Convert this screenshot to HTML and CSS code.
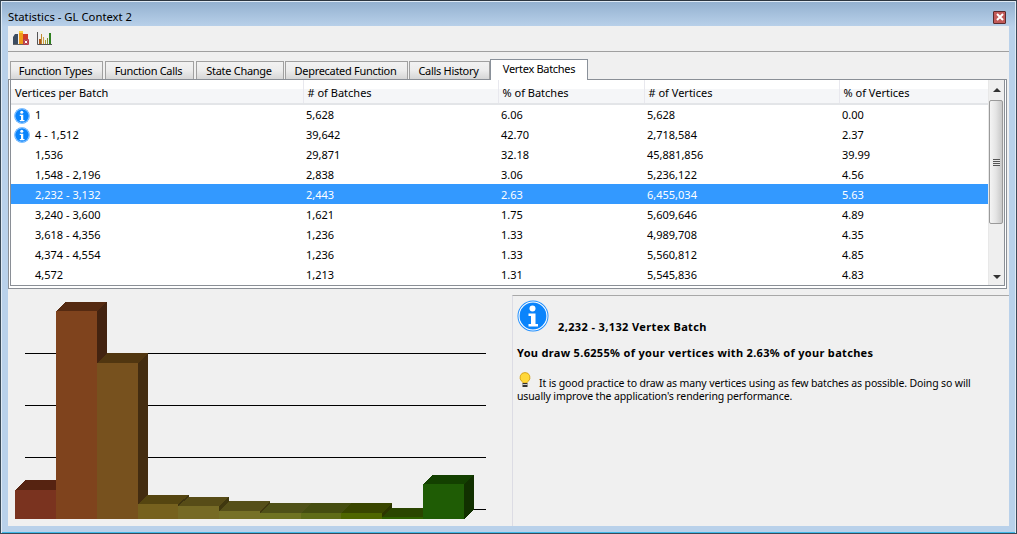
FILE: index.html
```html
<!DOCTYPE html>
<html lang="en">
<head>
<meta charset="utf-8">
<title>Statistics - GL Context 2</title>
<link rel="stylesheet" href="styles.css">
</head>
<body>
<svg class="defs" width="0" height="0" aria-hidden="true">
  <defs>
    <symbol id="info" viewBox="0 0 32 32">
      <circle cx="16" cy="16" r="15.5" fill="#1f8fff"/>
      <circle cx="16" cy="16" r="14" fill="none" stroke="#fff" stroke-width="1.1"/>
      <circle cx="16" cy="16" r="13" fill="#0a84fb"/>
      <circle cx="15.5" cy="8.5" r="3" fill="#fff"/>
      <path d="M11.5 13.5h7v10.5h2.5v2.5H11.5V24h2.5v-8h-2.500z" fill="#fff"/>
    </symbol>
  </defs>
</svg>
<div class="window">
  <header class="titlebar">
    <span class="title">Statistics - GL Context 2</span>
    <span class="close"><svg width="8" height="8" viewBox="0 0 8 8"><path d="M1 1l6 6M7 1L1 7" stroke="#fff" stroke-width="2"/></svg></span>
  </header>
  <div class="toolbar">
    <svg class="tool" width="17" height="17" viewBox="0 0 17 17">
      <path d="M0 14V7l2-3h3v10z" fill="#3c4c60"/>
      <rect x="6" y="1" width="4" height="13" fill="#f09a18"/>
      <rect x="6" y="1" width="4" height="2" fill="#f8d040"/>
      <rect x="10" y="4" width="5" height="10" fill="#d03a28"/>
      <rect x="0" y="14" width="11" height="1" fill="#666"/>
      <rect x="10" y="9" width="6" height="6" rx="1" fill="#b8404c"/>
      <path d="M11.800 10.800l2.400 2.400M14.200 10.800l-2.400 2.400" stroke="#fff" stroke-width="1"/>
    </svg>
    <svg class="tool" width="15" height="15" viewBox="0 0 15 15">
      <path d="M.5 1v12.500H15" fill="none" stroke="#555" stroke-width="1"/>
      <rect x="2" y="8" width="2" height="5" fill="#b05a20"/>
      <rect x="4" y="3" width="1" height="10" fill="#c08a30"/>
      <rect x="6" y="6" width="1" height="7" fill="#d0a040"/>
      <rect x="8" y="9" width="1" height="4" fill="#a8a030"/>
      <rect x="10" y="7" width="1" height="6" fill="#80902a"/>
      <rect x="12" y="2" width="2" height="11" fill="#2f8020"/>
    </svg>
  </div>
  <nav class="tabs">
    <span class="tab tab-1">Function Types</span>
    <span class="tab tab-2">Function Calls</span>
    <span class="tab tab-3">State Change</span>
    <span class="tab tab-4">Deprecated Function</span>
    <span class="tab tab-5">Calls History</span>
    <span class="tab tab-active">Vertex Batches</span>
  </nav>
  <section class="pane">
    <div class="list-frame">
      <div class="list">
        <div class="list-main">
          <table class="grid">
            <colgroup>
              <col class="c1"><col class="c2"><col class="c3"><col class="c4"><col class="c5">
            </colgroup>
            <thead>
              <tr><th>Vertices per Batch</th><th># of Batches</th><th>% of Batches</th><th># of Vertices</th><th>% of Vertices</th></tr>
            </thead>
            <tbody>
              <tr><td class="first"><svg class="row-icon" width="16" height="16"><use href="#info"/></svg>1</td><td>5,628</td><td>6.06</td><td>5,628</td><td>0.00</td></tr>
              <tr><td class="first"><svg class="row-icon" width="16" height="16"><use href="#info"/></svg>4 - 1,512</td><td>39,642</td><td>42.70</td><td>2,718,584</td><td>2.37</td></tr>
              <tr><td class="first">1,536</td><td>29,871</td><td>32.18</td><td>45,881,856</td><td>39.99</td></tr>
              <tr><td class="first">1,548 - 2,196</td><td>2,838</td><td>3.06</td><td>5,236,122</td><td>4.56</td></tr>
              <tr class="selected"><td class="first">2,232 - 3,132</td><td>2,443</td><td>2.63</td><td>6,455,034</td><td>5.63</td></tr>
              <tr><td class="first">3,240 - 3,600</td><td>1,621</td><td>1.75</td><td>5,609,646</td><td>4.89</td></tr>
              <tr><td class="first">3,618 - 4,356</td><td>1,236</td><td>1.33</td><td>4,989,708</td><td>4.35</td></tr>
              <tr><td class="first">4,374 - 4,554</td><td>1,236</td><td>1.33</td><td>5,560,812</td><td>4.85</td></tr>
              <tr><td class="first">4,572</td><td>1,213</td><td>1.31</td><td>5,545,836</td><td>4.83</td></tr>
            </tbody>
          </table>
        </div>
        <div class="scrollbar">
          <span class="arrow arrow-up"></span>
          <div class="thumb"><span class="grip"></span></div>
          <span class="arrow arrow-down"></span>
        </div>
      </div>
    </div>
  </section>
  <div class="split">
    <div class="chart">
      <svg width="504" height="233" viewBox="8 293 504 233">
        <g stroke="#000" stroke-width="1" shape-rendering="crispEdges">
          <path d="M25 353.500H486M25 405.500H486M25 457.500H486M25 509.500H486"/>
        </g>
        <g shape-rendering="crispEdges">
          <path d="M15 490l10-10h41v10z" fill="#562311"/>
          <rect x="15" y="490" width="41" height="29" fill="#7a331f"/>

          <path d="M97 311l10-9V353l-10 10z" fill="#432310"/>
          <path d="M56 311l10-9h41l-10 9z" fill="#552a11"/>
          <rect x="56" y="311" width="41" height="208" fill="#7f431d"/>

          <path d="M138 363l10-10V495l-10 9z" fill="#432c10"/>
          <path d="M97 363l10-10h41l-10 10z" fill="#513610"/>
          <rect x="97" y="363" width="41" height="156" fill="#77511e"/>

          <path d="M178 504l11-9v2l-11 9z" fill="#3f3410"/>
          <path d="M138 504l10-9h41l-11 9z" fill="#554510"/>
          <rect x="138" y="504" width="40" height="15" fill="#76611e"/>

          <path d="M219 506l10-9v4l-10 10z" fill="#40380f"/>
          <path d="M178 506l11-9h40l-10 9z" fill="#574c17"/>
          <rect x="178" y="506" width="41" height="13" fill="#766a25"/>

          <path d="M260 511l10-10v2l-10 10z" fill="#40390f"/>
          <path d="M219 511l10-10h41l-10 10z" fill="#565019"/>
          <rect x="219" y="511" width="41" height="8" fill="#767127"/>

          <path d="M260 513l10-10h41l-10 10z" fill="#4f5118"/>
          <rect x="260" y="513" width="41" height="6" fill="#6f7322"/>

          <path d="M301 513l10-10h40l-10 10z" fill="#454d10"/>
          <rect x="301" y="513" width="40" height="6" fill="#5f6c17"/>

          <path d="M382 513l10-10v5l-10 9z" fill="#2c3600"/>
          <path d="M341 513l10-10h41l-10 10z" fill="#394500"/>
          <rect x="341" y="513" width="41" height="6" fill="#4f6600"/>

          <path d="M382 517l10-9h41l-10 9z" fill="#2a4500"/>
          <rect x="382" y="517" width="41" height="2" fill="#2f6000"/>

          <path d="M464 484l10-9v34l-10 10z" fill="#113000"/>
          <path d="M423 484l10-9h41l-10 9z" fill="#134000"/>
          <rect x="423" y="484" width="41" height="35" fill="#1f5c05"/>
        </g>
      </svg>
    </div>
    <aside class="info">
      <div class="info-head">
        <svg class="info-icon" width="32" height="32"><use href="#info"/></svg>
        <span class="info-title">2,232 - 3,132 Vertex Batch</span>
      </div>
      <p class="info-summary">You draw 5.6255% of your vertices with 2.63% of your batches</p>
      <p class="info-text"><svg class="bulb" width="12" height="16" viewBox="0 0 12 16">
          <path d="M6 .5a5 5 0 0 0-3 9c.6.5 1 1 1 1.500h4c0-.5.4-1 1-1.500a5 5 0 0 0-3-9z" fill="#ffd83a" stroke="#d09a10" stroke-width=".8"/>
          <rect x="3.500" y="11" width="5" height="4" fill="#333"/>
          <path d="M3.500 12.500h5" stroke="#ccc"/>
        </svg>It is good practice to draw as many vertices using as few batches as possible. Doing so will usually improve the application's rendering performance.</p>
    </aside>
  </div>
</div>
</body>
</html>
```

FILE: styles.css
```css
* { box-sizing: border-box; }
html, body { margin: 0; padding: 0; }
body { width: 1017px; height: 534px; overflow: hidden; font-family: "Noto Sans", "Open Sans", sans-serif; font-size: 11px; color: #000; }
.defs { position: absolute; }
.window {
  width: 1017px; height: 534px; display: flex; flex-direction: column;
  padding: 0 8px 7px;
  border: 1px solid #3a4a58; border-top-color: #2c3640;
  background: #b9d1ea;
  background-image: linear-gradient(#92b0cf 0, #b9d1ea 26px);
  box-shadow: inset 1px 1px 0 #dfeaf5, inset -1px 0 0 #dfeaf5, inset 0 -1px 0 #3fb8e8;
  margin: 0;
}
.titlebar { height: 25px; margin: 0 -1px 0 -1px; display: flex; align-items: center; justify-content: space-between; padding: 5px 3px 0 0; flex: none; }
.title { font-size: 11.3px; color: #000; }
.close { width: 13px; height: 13px; margin-top: 2px; display: flex; align-items: center; justify-content: center; background: #c25a58; border: 1px solid #5a2a2c; border-radius: 1px; }
.close svg { display: block; }
.toolbar { height: 26px; margin: 0 -1px; background: #f0f0f0; border-bottom: 1px solid #a0a0a0; display: flex; align-items: center; gap: 7px; padding: 0 0 0 5px; flex: none; }
.tool { display: block; }
.tabs { height: 27px; margin: 0 -1px; background: #f0f0f0; display: flex; align-items: flex-end; padding-left: 2px; flex: none; }
.tab { height: 18px; line-height: 17px; text-align: center; letter-spacing: -.3px; padding-right: 2px; border: 1px solid #a0a0a0; border-bottom: 0; background: linear-gradient(#f2f2f2 0, #ececec 50%, #d6d6d6 100%); }
.tab-1 { width: 93px; }
.tab-2 { width: 89px; margin-left: 2px; }
.tab-3 { width: 88px; margin-left: 2px; }
.tab-4 { width: 123px; margin-left: 1px; }
.tab-5 { width: 81px; margin-left: 1px; }
.tab-active { width: 98px; height: 21px; line-height: 18px; padding-right: 0; background: #fff; border: 1px solid #8a919a; border-bottom: 0; position: relative; top: 1px; }
.pane { margin: 0 -1px; background: #f0f0f0; flex: none; height: 214px; }
.list-frame { height: 210px; width: 999px; border: 1px solid #8a8f96; background: #fff; padding: 0 1px 2px; }
.list { height: 206px; width: 995px; border: 1px solid #8a8f96; border-top: 0; background: #fff; display: flex; }
.list-main { width: 977px; overflow: hidden; flex: none; }
.grid { border-collapse: collapse; table-layout: fixed; width: 977px; }
.c1 { width: 292px; } .c2 { width: 195px; } .c3 { width: 146px; } .c4 { width: 195px; } .c5 { width: 149px; }
.grid th { height: 24px; padding: 1px 0 0 4px; font-weight: 400; text-align: left; border-bottom: 2px solid #e3e5e8; border-left: 1px solid #e8e8ee; background: linear-gradient(#fff 0, #fff 40%, #f5f6f8 41%, #f5f6f8 100%); }
.grid th:first-child { border-left: 0; }
.grid td { height: 20px; padding: 0 0 0 3px; white-space: nowrap; }
.grid td.first { padding-left: 24px; position: relative; }
.row-icon { position: absolute; left: 3px; top: 3px; }
.selected td { background: #3399ff; color: #fff; }
.scrollbar { flex: 1; background: #efefef; display: flex; flex-direction: column; align-items: stretch; position: relative; border-left: 1px solid #e8e8e8; }
.arrow { height: 20px; flex: none; position: relative; }
.arrow::after { content: ""; position: absolute; left: 4px; border-left: 4px solid transparent; border-right: 4px solid transparent; }
.arrow-up::after { top: 8px; border-bottom: 4px solid #333; }
.arrow-down { margin-top: auto; height: 25px; }
.arrow-down::after { top: 15px; border-top: 4px solid #333; }
.thumb { height: 124px; margin-right: 1px; flex: none; border: 1px solid #9a9a9a; border-radius: 2px; background: linear-gradient(90deg, #f4f4f4, #e4e4e4 50%, #c8c8c8); position: relative; display: flex; align-items: center; justify-content: center; }
.grip { width: 7px; height: 7px; background: repeating-linear-gradient(#555 0, #555 1px, #e8e8e8 1px, #e8e8e8 2px); }
.split { flex: 1; margin: 0 -1px; display: flex; background: #f0f0f0; min-height: 0; }
.chart { width: 504px; flex: none; overflow: hidden; }
.chart svg { display: block; }
.info { flex: 1; margin-top: 2px; border-top: 1px solid #a8a8a8; border-left: 1px solid #dcdce4; padding: 4px 0 0 4px; }
.info-head { display: flex; align-items: flex-end; gap: 9px; height: 32px; }
.info-icon { display: block; flex: none; }
.info-title { font-weight: 700; letter-spacing: .38px; line-height: 15px; margin-bottom: -2px; }
.info-summary { font-weight: 700; letter-spacing: .32px; margin: 13px 0 0; line-height: 15px; }
.info-text { margin: 12px 0 0; font-size: 10.5px; letter-spacing: -.13px; line-height: 13px; width: 480px; }
.bulb { vertical-align: -1px; margin: 0 8px 0 2px; }
```
